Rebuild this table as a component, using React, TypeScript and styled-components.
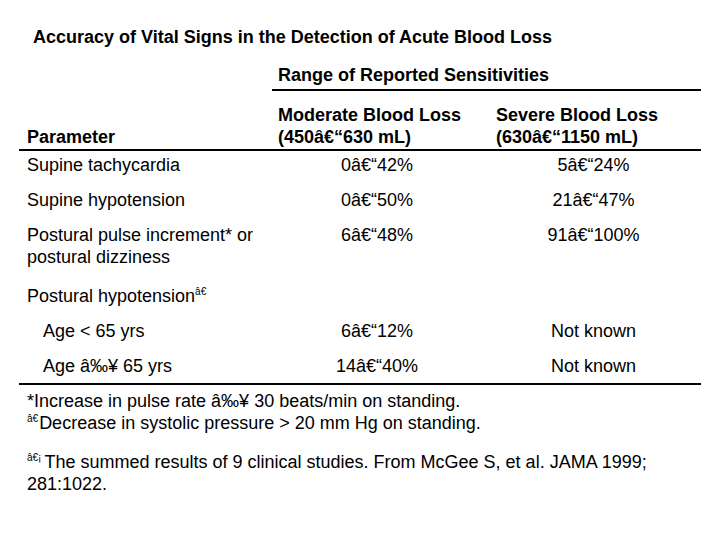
import React from 'react';
import styled, { createGlobalStyle } from 'styled-components';

const GlobalStyle = createGlobalStyle`
    html, body {
        margin: 0;
        padding: 0;
        background: #ffffff;
    }
    body {
        font-family: "Liberation Sans", Arial, sans-serif;
        color: #000000;
    }
`;

interface RowData {
    label: string
    labelSup?: string
    moderate?: string
    severe?: string
    indent?: boolean
    group?: boolean
}

const rows: RowData[] = [
    { label: 'Supine tachycardia', moderate: '0â€“42%', severe: '5â€“24%' },
    { label: 'Supine hypotension', moderate: '0â€“50%', severe: '21â€“47%' },
    { label: 'Postural pulse increment* or postural dizziness', moderate: '6â€“48%', severe: '91â€“100%' },
    { label: 'Postural hypotension', labelSup: 'â€', group: true },
    { label: 'Age < 65 yrs', moderate: '6â€“12%', severe: 'Not known', indent: true },
    { label: 'Age â‰¥ 65 yrs', moderate: '14â€“40%', severe: 'Not known', indent: true },
];

const Page = styled.div`
    width: 682px;
    padding: 26px 0 0 19px;
`;

const Title = styled.h1`
    margin: 0 0 0 14px;
    font-size: 18px;
    line-height: 22px;
    font-weight: bold;
`;

const Table = styled.div`
    margin-top: 16px;
`;

const Grid = styled.div`
    display: grid;
    grid-template-columns: 253px 218px 211px;
`;

const RangeHeading = styled.div`
    grid-column: 2 / 4;
    padding: 0 0 3px 6px;
    border-bottom: 2px solid #000;
    font-size: 18px;
    line-height: 22px;
    font-weight: bold;
`;

const HeaderRow = styled(Grid)`
    margin-top: 13px;
    padding-bottom: 1px;
    border-bottom: 2px solid #000;
`;

const HeadCell = styled.div<{ $first?: boolean }>`
    padding-left: ${({ $first }) => ($first ? '8px' : '6px')};
    align-self: end;
    font-size: 18px;
    line-height: 22px;
    font-weight: bold;
`;

const Body = styled.div`
    display: grid;
    row-gap: 13px;
    padding: 3px 0 6px;
    border-bottom: 2px solid #000;
`;

const Row = styled(Grid)<{ $group?: boolean }>`
    margin-top: ${({ $group }) => ($group ? '4px' : '0')};
`;

const LabelCell = styled.div<{ $indent?: boolean }>`
    padding-left: ${({ $indent }) => ($indent ? '24px' : '8px')};
    font-size: 18px;
    line-height: 22px;
`;

const ValueCell = styled.div<{ $right?: number }>`
    padding-right: ${({ $right }) => $right || 0}px;
    text-align: center;
    font-size: 18px;
    line-height: 22px;
`;

const Sup = styled.sup<{ $gap?: number }>`
    display: inline-block;
    font-size: 10px;
    line-height: 10px;
    vertical-align: 7px;
    margin-right: ${({ $gap }) => $gap ?? 1}px;
`;

const Notes = styled.div`
    width: 673px;
    padding: 5px 0 0 8px;
`;

const Note = styled.p<{ $space?: number }>`
    margin: ${({ $space }) => $space || 0}px 0 0;
    font-size: 18px;
    line-height: 22px;
`;

export default function App() {
    return (
        <Page>
            <GlobalStyle />
            <Title>Accuracy of Vital Signs in the Detection of Acute Blood Loss</Title>
            <Table>
                <Grid>
                    <RangeHeading>Range of Reported Sensitivities</RangeHeading>
                </Grid>
                <HeaderRow>
                    <HeadCell $first>Parameter</HeadCell>
                    <HeadCell>Moderate Blood Loss<br />(450â€“630 mL)</HeadCell>
                    <HeadCell>Severe Blood Loss<br />(630â€“1150 mL)</HeadCell>
                </HeaderRow>
                <Body>
                    {rows.map((r) => (
                        <Row key={r.label} $group={r.group}>
                            <LabelCell $indent={r.indent}>
                                {r.label}
                                {r.labelSup && <Sup>{r.labelSup}</Sup>}
                            </LabelCell>
                            <ValueCell $right={8}>{r.moderate}</ValueCell>
                            <ValueCell $right={4}>{r.severe}</ValueCell>
                        </Row>
                    ))}
                </Body>
            </Table>
            <Notes>
                <Note>*Increase in pulse rate â‰¥ 30 beats/min on standing.</Note>
                <Note><Sup>â€</Sup>Decrease in systolic pressure &gt; 20 mm Hg on standing.</Note>
                <Note $space={17}><Sup $gap={3}>â€¡</Sup>The summed results of 9 clinical studies. From McGee S, et al. JAMA 1999; 281:1022.</Note>
            </Notes>
        </Page>
    );
}
